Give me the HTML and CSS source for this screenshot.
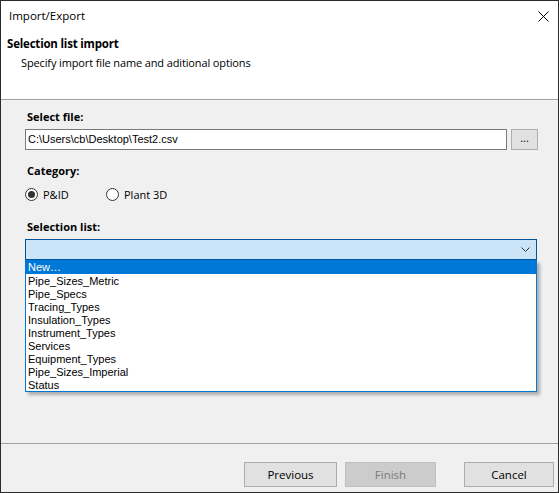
FILE: index.html
```html
<!DOCTYPE html>
<html>
<head>
<meta charset="utf-8">
<link rel="stylesheet" href="styles.css">
</head>
<body>
<div class="window">
  <div class="titlebar">
    <span class="title">Import/Export</span>
    <svg class="close" width="11" height="11" viewBox="0 0 11 11"><path d="M0.5 0.5 L10.5 10.5 M10.5 0.5 L0.5 10.5" stroke="#000" stroke-width="1" fill="none"/></svg>
  </div>
  <div class="header">
    <div class="h-title">Selection list import</div>
    <div class="h-sub">Specify import file name and aditional options</div>
  </div>
  <div class="content">
    <div class="label">Select file:</div>
    <div class="file-row">
      <div class="textbox">C:\Users\cb\Desktop\Test2.csv</div>
      <div class="browse">...</div>
    </div>
    <div class="label gap-cat">Category:</div>
    <div class="radios">
      <div class="radio"><span class="dot checked"></span><span>P&amp;ID</span></div>
      <div class="radio"><span class="dot"></span><span>Plant 3D</span></div>
    </div>
    <div class="label gap-sel">Selection list:</div>
    <div class="combo-wrap">
      <div class="combo">
        <svg class="chev" width="9" height="5" viewBox="0 0 9 5"><path d="M0.5 0.5 L4.5 4.5 L8.5 0.5" stroke="#333" stroke-width="1" fill="none"/></svg>
      </div>
      <ul class="dropdown">
        <li class="sel">New…</li>
        <li>Pipe_Sizes_Metric</li>
        <li>Pipe_Specs</li>
        <li>Tracing_Types</li>
        <li>Insulation_Types</li>
        <li>Instrument_Types</li>
        <li>Services</li>
        <li>Equipment_Types</li>
        <li>Pipe_Sizes_Imperial</li>
        <li>Status</li>
      </ul>
    </div>
  </div>
  <div class="footer">
    <div class="btn prev">Previous</div>
    <div class="btn finish">Finish</div>
    <div class="btn cancel">Cancel</div>
  </div>
</div>
</body>
</html>
```
FILE: styles.css
```css
* { box-sizing: border-box; }
html, body { margin: 0; padding: 0; }
body {
  font-family: "Open Sans", "Noto Sans", sans-serif;
  font-size: 11px;
  color: #000;
  background: #fff;
}
.window {
  width: 559px;
  height: 493px;
  border: 1px solid #2b2b2b;
  display: flex;
  flex-direction: column;
  background: #fff;
}
.titlebar {
  height: 31px;
  display: flex;
  align-items: center;
  justify-content: space-between;
  padding: 0 9px 2px 8px;
  font-size: 11.5px;
}
.close { margin-top: 1px; }
.header {
  height: 68px;
  border-bottom: 1px solid #a0a0a0;
  padding-top: 4px;
}
.h-title {
  font-weight: bold;
  font-size: 11.5px;
  line-height: 16px;
  padding-left: 6px;
  letter-spacing: -0.2px;
}
.h-sub {
  line-height: 16px;
  margin-top: 3px;
  padding-left: 20px;
  letter-spacing: -0.13px;
}
.content {
  height: 344px;
  background: #f0f0f0;
  border-bottom: 1px solid #a0a0a0;
  padding: 9px 0 0 24px;
}
.label {
  font-weight: bold;
  line-height: 16px;
  padding-left: 2px;
}
.file-row {
  display: flex;
  margin-top: 4px;
  height: 21px;
}
.textbox {
  width: 482px;
  height: 21px;
  background: #fff;
  border: 1px solid #7a7a7a;
  padding-left: 2px;
  line-height: 19px;
  font-family: "Liberation Sans", Arial, sans-serif;
  font-size: 11px;
}
.browse {
  width: 27px;
  height: 21px;
  margin-left: 4px;
  background: #e1e1e1;
  border: 1px solid #adadad;
  text-align: center;
  line-height: 15px;
  font-size: 11px;
}
.gap-cat { margin-top: 13px; }
.radios {
  display: flex;
  margin-top: 7px;
  height: 16px;
  align-items: center;
}
.radio {
  display: flex;
  align-items: center;
  gap: 5px;
  width: 81px;
}
.dot {
  width: 13px;
  height: 13px;
  border-radius: 50%;
  border: 1px solid #333;
  background: #fff;
  display: flex;
  align-items: center;
  justify-content: center;
}
.dot.checked::after {
  content: "";
  width: 7px;
  height: 7px;
  border-radius: 50%;
  background: #333;
}
.gap-sel { margin-top: 17px; }
.combo-wrap {
  position: relative;
  margin-top: 4px;
  width: 512px;
}
.combo {
  height: 21px;
  background: #cce4f7;
  border: 1px solid #005499;
  display: flex;
  align-items: center;
  justify-content: flex-end;
  padding-right: 6px;
}
.dropdown {
  position: absolute;
  top: 21px;
  left: 0;
  width: 512px;
  margin: 0;
  padding: 0;
  list-style: none;
  background: #fff;
  border: 1px solid #0078d7;
  border-top: none;
  box-shadow: 3px 3px 3px rgba(0, 0, 0, 0.28);
  font-family: "Liberation Sans", Arial, sans-serif;
  font-size: 11px;
}
.dropdown li {
  height: 13px;
  line-height: 12px;
  padding: 1px 0 0 2px;
  white-space: nowrap;
}
.dropdown li.sel {
  height: 14px;
  line-height: 13px;
  background: #0078d7;
  color: #fff;
}
.footer {
  flex: 1;
  background: #f0f0f0;
  display: flex;
  padding: 18px 0 0 243px;
}
.btn {
  height: 25px;
  background: #e1e1e1;
  border: 1px solid #adadad;
  display: flex;
  align-items: center;
  justify-content: center;
  font-size: 11.5px;
  padding-bottom: 1px;
}
.prev { width: 93px; }
.finish {
  width: 91px;
  margin-left: 8px;
  background: #cccccc;
  border-color: #bfbfbf;
  color: #7a7a7a;
}
.cancel { width: 90px; margin-left: 28px; }
```
